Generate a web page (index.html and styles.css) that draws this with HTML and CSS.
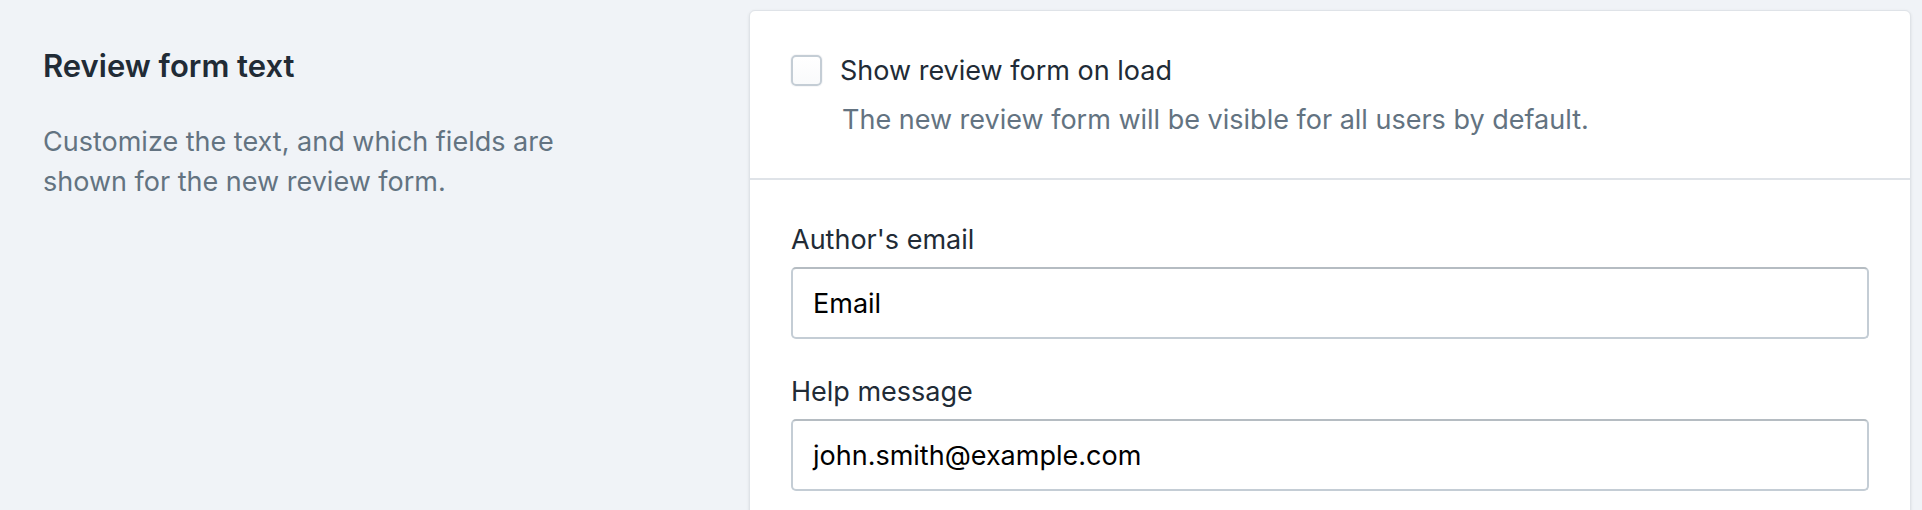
FILE: index.html
```html
<!DOCTYPE html>
<html lang="en">
<head>
<meta charset="utf-8">
<title>Review form text</title>
<link rel="stylesheet" href="styles.css">
</head>
<body>
<div class="layout">
  <div class="annotation">
    <h2 class="annotation-title">Review form text</h2>
    <p class="annotation-desc">Customize the text, and which fields are shown for the new review form.</p>
  </div>
  <div class="card">
    <div class="card-section">
      <label class="check-row">
        <span class="checkbox"></span>
        <span class="check-label">Show review form on load</span>
      </label>
      <p class="help-text">The new review form will be visible for all users by default.</p>
    </div>
    <div class="card-section second">
      <div class="field">
        <label class="field-label">Author's email</label>
        <div class="text-input">Email</div>
      </div>
      <div class="field">
        <label class="field-label">Help message</label>
        <div class="text-input">john.smith@example.com</div>
      </div>
    </div>
  </div>
</div>
</body>
</html>
```

FILE: styles.css
```css
* { box-sizing: border-box; }
html, body {
  margin: 0;
  padding: 0;
  background: #f0f3f7;
  font-family: Inter, "Noto Sans", sans-serif;
  color: #212b36;
  overflow: hidden;
}
.layout {
  display: flex;
  align-items: flex-start;
  padding: 10px 11px 0 43px;
  height: 510px;
}
.annotation {
  flex: 0 0 706px;
  padding-top: 38px;
}
.annotation-title {
  margin: 0;
  font-size: 31px;
  line-height: 36px;
  font-weight: 600;
  color: #212b36;
}
.annotation-desc {
  margin: 38px 0 0;
  max-width: 580px;
  font-size: 27px;
  line-height: 40px;
  color: #637381;
}
.card {
  flex: 1 1 auto;
  background: #fff;
  border: 1px solid #dfe3e8;
  border-radius: 6px;
  box-shadow: 0 1px 3px rgba(63, 63, 68, 0.12);
  height: 520px;
}
.card-section {
  padding: 39px 41px 38px;
}
.card-section.second {
  border-top: 2px solid #dfe3e8;
  padding-top: 40px;
}
.check-row {
  display: flex;
  align-items: center;
  gap: 18px;
  height: 40px;
}
.checkbox {
  width: 31px;
  height: 31px;
  flex: 0 0 31px;
  border: 2px solid #c4cdd5;
  border-radius: 5px;
  background: linear-gradient(#fff, #f9fafb);
  box-shadow: 0 0 0 1px rgba(63, 63, 68, 0.04);
}
.check-label {
  font-size: 27px;
  line-height: 40px;
  color: #212b36;
  position: relative;
  top: 1px;
}
.help-text {
  margin: 10px 0 0 51px;
  font-size: 27px;
  line-height: 40px;
  color: #637381;
}
.field + .field {
  margin-top: 33px;
}
.field-label {
  display: block;
  font-size: 27px;
  line-height: 40px;
  color: #212b36;
  margin-bottom: 7px;
}
.text-input {
  height: 72px;
  border: 2px solid #c4cdd5;
  border-top-color: #b5bcc2;
  border-radius: 5px;
  padding: 0 20px;
  display: flex;
  align-items: center;
  font-size: 27px;
  color: #000;
  background: #fff;
}
```
